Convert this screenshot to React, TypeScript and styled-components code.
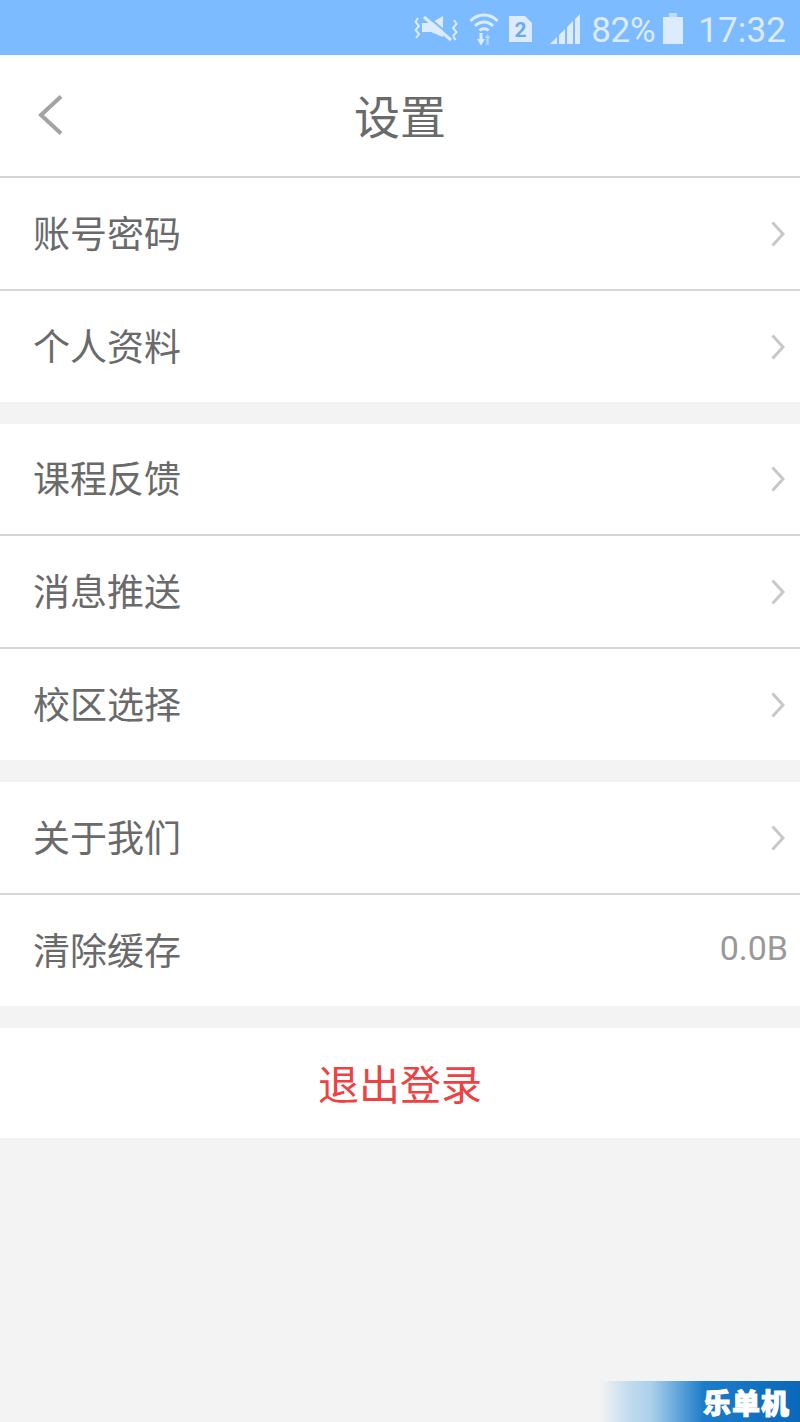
import React from 'react';
import styled, { createGlobalStyle } from 'styled-components';

const GlobalStyle = createGlobalStyle`
  html, body {
    margin: 0;
    padding: 0;
    background: #f3f3f3;
    font-family: "Noto Sans CJK SC", "Noto Sans", sans-serif;
  }
`;

const Page = styled.div`
  position: relative;
  width: 800px;
  height: 1422px;
  overflow: hidden;
  background: #f3f3f3;
`;

const StatusBar = styled.div`
  height: 55px;
  box-sizing: border-box;
  background: #7cbbff;
  display: flex;
  align-items: center;
  justify-content: flex-end;
  padding: 5px 14px 0 0;
  color: #dcebfd;
  font-family: Roboto, sans-serif;
  font-size: 35px;
`;

const StatusIcon = styled.svg<{ $gap: number }>`
  display: block;
  margin-right: ${(p) => p.$gap}px;
  margin-top: -3px;
`;

const Percent = styled.span`
  margin-right: 8px;
  letter-spacing: -0.3px;
`;

const Clock = styled.span`
  margin-left: 15px;
  letter-spacing: 0.1px;
`;

const Header = styled.header`
  height: 121px;
  background: #fff;
  border-bottom: 2px solid #d6d6d6;
  display: flex;
  align-items: center;
  justify-content: center;
  position: relative;
`;

const BackIcon = styled.svg`
  position: absolute;
  left: 36px;
  top: 38px;
`;

const Title = styled.h1`
  margin: 0 0 4px;
  font-size: 46px;
  font-weight: 400;
  color: #6a6a6a;
  line-height: 1;
`;

const Group = styled.section`
  background: #fff;
  margin-bottom: 22px;
`;

const Row = styled.div`
  height: 110.8px;
  display: flex;
  align-items: center;
  justify-content: space-between;
  padding: 0 15px 0 34px;
  border-bottom: 2px solid #d6d6d6;

  &:last-child {
    border-bottom: 0;
  }
`;

const RowLabel = styled.span`
  font-size: 37px;
  color: #6a6a6a;
  margin: 0 0 3px -1px;
`;

const RowValue = styled.span`
  font-family: Roboto, sans-serif;
  font-size: 34px;
  color: #999;
  margin: 0 -3px 4px 0;
`;

const ChevronIcon = styled.svg`
  display: block;
  margin-top: 1px;
`;

const Logout = styled.button`
  display: block;
  width: 100%;
  height: 110px;
  border: 0;
  padding: 0 0 1px;
  background: #fff;
  color: #ee4242;
  font-family: inherit;
  font-size: 41px;
`;

const Watermark = styled.div`
  position: absolute;
  right: 0;
  bottom: 0;
  width: 200px;
  height: 41px;
  background: linear-gradient(90deg, rgba(21, 116, 200, 0) 0%, #c4dcee 14%, #a9cfea 26%, #1d7cc9 52%, #0a68bb 100%);
  display: flex;
  align-items: center;
  justify-content: flex-end;
  padding-right: 10px;
  box-sizing: border-box;
  color: #fff;
  font-size: 28px;
  font-weight: 900;
  letter-spacing: 1px;
  -webkit-text-stroke: 1px #fff;
`;

const Chevron = () => (
  <ChevronIcon width="14" height="26" viewBox="0 0 14 26" fill="none">
    <path d="M1.5 1.5 L12 13 L1.5 24.5" stroke="#c8c8c8" strokeWidth="3" />
  </ChevronIcon>
);

const groups: { label: string; value?: string }[][] = [
  [{ label: '账号密码' }, { label: '个人资料' }],
  [{ label: '课程反馈' }, { label: '消息推送' }, { label: '校区选择' }],
  [{ label: '关于我们' }, { label: '清除缓存', value: '0.0B' }],
];

const App = () => {
  return (
    <Page>
      <GlobalStyle />
      <StatusBar>
        <StatusIcon $gap={11} width="44" height="28" viewBox="0 0 44 28" fill="none" stroke="#dcebfd">
          <path d="M4 3 L1.5 7 L5 11 L1.5 15 L5 19 L2 23" strokeWidth="2" />
          <path d="M40 5 L42.5 9 L39 13 L42.5 17 L39 21 L41.5 25" strokeWidth="2" />
          <path d="M8 8 H17 L29 1 V22 L17 17 H8 Z" fill="#dcebfd" stroke="none" />
          <path d="M10 2 L37 25" strokeWidth="3" />
          <path d="M12.5 0.5 L38.5 22.5" strokeWidth="2" stroke="#7cbbff" />
        </StatusIcon>
        <StatusIcon $gap={10} width="30" height="34" viewBox="0 0 30 34" fill="none" stroke="#dcebfd">
          <path d="M1.5 9 C9 1 21 1 28.5 9" strokeWidth="3" />
          <path d="M6 14 C11 8.5 19 8.5 24 14" strokeWidth="3" />
          <path d="M10.5 18.5 C13 16 17 16 19.5 18.5" strokeWidth="3" />
          <path d="M12 21 V28" strokeWidth="3" />
          <path d="M8 27 H16 L12 33.5 Z" fill="#dcebfd" stroke="none" />
          <path d="M18.5 33 V25" strokeWidth="2.4" opacity="0.55" />
          <path d="M15.5 26 L18.5 22 L21.5 26 Z" fill="#dcebfd" stroke="none" opacity="0.55" />
        </StatusIcon>
        <StatusIcon $gap={18} width="23" height="26" viewBox="0 0 23 26">
          <path d="M0 0 H16 L23 7 V26 H0 Z" fill="#dcebfd" />
          <text x="11.5" y="21" textAnchor="middle" fontFamily="Roboto, sans-serif" fontWeight="700" fontSize="21" fill="#6ea9ea">2</text>
        </StatusIcon>
        <StatusIcon $gap={11} width="30" height="30" viewBox="0 0 30 30" fill="#dcebfd">
          <path d="M0 30 L7 23 V30 Z" />
          <path d="M9 21 L15 15 V30 H9 Z" />
          <path d="M17 13 L23 7 V30 H17 Z" />
          <path d="M25 5 L30 0 V30 H25 Z" />
        </StatusIcon>
        <Percent>82%</Percent>
        <StatusIcon $gap={0} width="20" height="31" viewBox="0 0 20 31" fill="#dcebfd">
          <path d="M6 0 H14 V4 H6 Z" opacity="0.65" />
          <path d="M0 4 H20 V31 H0 Z" />
        </StatusIcon>
        <Clock>17:32</Clock>
      </StatusBar>
      <Header>
        <BackIcon width="28" height="44" viewBox="0 0 28 44" fill="none">
          <path d="M25 3.5 L5 22 L25 40.5" stroke="#a3a3a3" strokeWidth="4" />
        </BackIcon>
        <Title>设置</Title>
      </Header>
      {groups.map((items) => (
        <Group key={items[0].label}>
          {items.map((item) => (
            <Row key={item.label}>
              <RowLabel>{item.label}</RowLabel>
              {item.value ? <RowValue>{item.value}</RowValue> : <Chevron />}
            </Row>
          ))}
        </Group>
      ))}
      <Logout>退出登录</Logout>
      <Watermark>乐单机</Watermark>
    </Page>
  );
};

export default App;
